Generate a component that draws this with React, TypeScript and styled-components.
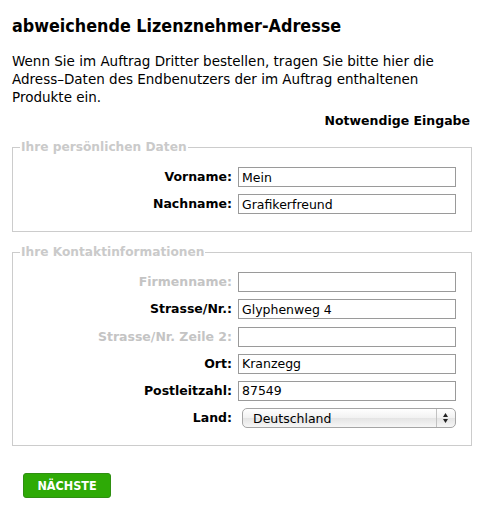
import React from "react";
import styled, { createGlobalStyle } from "styled-components";

const GlobalStyle = createGlobalStyle`
  body {
    margin: 0;
    background: #fff;
    color: #000;
    font-family: "DejaVu Sans", "Liberation Sans", sans-serif;
    font-size: 12px;
  }
`;

const Page = styled.div`
  width: 460px;
  padding: 0 12px;
`;

const Title = styled.h1`
  margin: 14px 0 0;
  font-family: "DejaVu Sans", sans-serif;
  font-stretch: condensed;
  font-size: 17.8px;
  line-height: 24px;
  font-weight: bold;
`;

const Intro = styled.p`
  margin: 14px 0 0;
  font-size: 13.5px;
  line-height: 18px;
`;

const Required = styled.div`
  margin-top: 6px;
  text-align: right;
  font-size: 12.5px;
  font-weight: bold;
  line-height: 18px;
  padding-right: 2px;
`;

const Fieldset = styled.fieldset<{ $gap: number }>`
  margin: ${(p) => p.$gap}px 0 0;
  padding: 12px 0 17px;
  border: 1px solid #cccccc;
  min-width: 0;
`;

const Legend = styled.legend`
  margin-left: 7px;
  padding: 0 1px;
  color: #cacaca;
  font-size: 12.2px;
  font-weight: bold;
  line-height: 16px;
`;

const Rows = styled.div`
  display: grid;
  grid-template-columns: 219px 218px;
  column-gap: 6px;
  row-gap: 7.2px;
`;

const Label = styled.label<{ $muted?: boolean }>`
  text-align: right;
  font-size: 12.5px;
  font-weight: bold;
  line-height: 20px;
  color: ${(p) => (p.$muted ? "#c4c4c4" : "#000")};
  white-space: nowrap;
`;

const TextInput = styled.input`
  box-sizing: border-box;
  width: 218px;
  height: 20px;
  margin: 0;
  padding: 0 3px;
  border: 1px solid #9a9a9a;
  border-radius: 0;
  font-family: "DejaVu Sans", sans-serif;
  font-size: 12.5px;
  color: #000;
  background: #fff;
  outline: none;
`;

const SelectWrap = styled.div`
  position: relative;
  margin-left: 4px;
  width: 214px;
  height: 20px;
`;

const Select = styled.select`
  box-sizing: border-box;
  width: 100%;
  height: 20px;
  margin: 0;
  padding: 0 24px 0 10px;
  appearance: none;
  border: 1px solid #a5a5a5;
  border-radius: 5px;
  background: linear-gradient(#ffffff, #f1f1f1 50%, #e4e4e4 51%, #f6f6f6);
  font-family: "DejaVu Sans", sans-serif;
  font-size: 12.5px;
  color: #000;
  outline: none;
`;

const Arrows = styled.svg`
  position: absolute;
  right: 0;
  top: 1px;
  pointer-events: none;
`;

const Footer = styled.div`
  padding: 27px 0 0 11px;
`;

const NextButton = styled.button`
  display: block;
  width: 88px;
  height: 25px;
  border: 1px solid #2f8f12;
  border-radius: 3px;
  background: #2eaa06;
  color: #fff;
  font-family: "DejaVu Sans", sans-serif;
  font-stretch: condensed;
  font-size: 12.5px;
  font-weight: bold;
  padding: 0;
`;

type Field = { label: string; value: string; muted?: boolean };

const personal: Field[] = [
  { label: "Vorname:", value: "Mein" },
  { label: "Nachname:", value: "Grafikerfreund" },
];

const contact: Field[] = [
  { label: "Firmenname:", value: "", muted: true },
  { label: "Strasse/Nr.:", value: "Glyphenweg 4" },
  { label: "Strasse/Nr. Zeile 2:", value: "", muted: true },
  { label: "Ort:", value: "Kranzegg" },
  { label: "Postleitzahl:", value: "87549" },
];

const FieldRows = ({ fields }: { fields: Field[] }) => (
  <>
    {fields.map((f) => (
      <React.Fragment key={f.label}>
        <Label $muted={f.muted}>{f.label}</Label>
        <TextInput defaultValue={f.value} />
      </React.Fragment>
    ))}
  </>
);

export default function App() {
  return (
    <>
      <GlobalStyle />
      <Page>
        <Title>abweichende Lizenznehmer-Adresse</Title>
        <Intro>
          Wenn Sie im Auftrag Dritter bestellen, tragen Sie bitte hier die
          Adress–Daten des Endbenutzers der im Auftrag enthaltenen Produkte
          ein.
        </Intro>
        <Required>Notwendige Eingabe</Required>

        <Fieldset $gap={9}>
          <Legend>Ihre persönlichen Daten</Legend>
          <Rows>
            <FieldRows fields={personal} />
          </Rows>
        </Fieldset>

        <Fieldset $gap={12}>
          <Legend>Ihre Kontaktinformationen</Legend>
          <Rows>
            <FieldRows fields={contact} />
            <Label>Land:</Label>
            <SelectWrap>
              <Select defaultValue="Deutschland">
                <option>Deutschland</option>
                <option>Österreich</option>
                <option>Schweiz</option>
              </Select>
              <Arrows width="20" height="18" viewBox="0 0 20 18">
                <line x1="0.5" y1="0" x2="0.5" y2="18" stroke="#c2c2c2" />
                <path d="M7 8 L12 8 L9.5 4 Z" fill="#222" />
                <path d="M7 10 L12 10 L9.5 14 Z" fill="#222" />
              </Arrows>
            </SelectWrap>
          </Rows>
        </Fieldset>

        <Footer>
          <NextButton>NÄCHSTE</NextButton>
        </Footer>
      </Page>
    </>
  );
}
